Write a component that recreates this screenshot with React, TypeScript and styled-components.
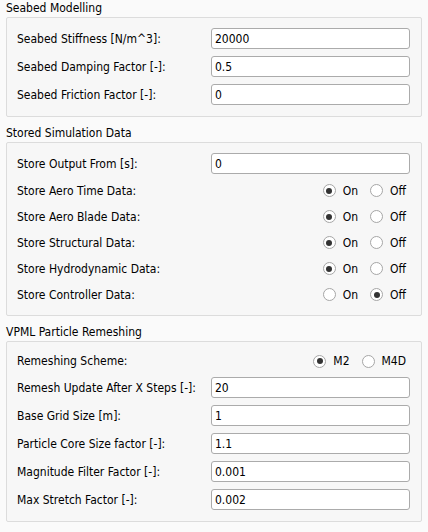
import React from "react";
import styled, { createGlobalStyle } from "styled-components";

const GlobalStyle = createGlobalStyle`
  html, body {
    margin: 0;
    padding: 0;
    background: #fafafa;
  }
  body {
    font-family: "DejaVu Sans Condensed", "DejaVu Sans", sans-serif;
    font-size: 12px;
    color: #000;
  }
  * { box-sizing: border-box; }
`;

const Page = styled.div`
  width: 428px;
  padding: 0 6px 0 6px;
  display: flex;
  flex-direction: column;
  gap: 8px;
`;

const Section = styled.section`
  display: flex;
  flex-direction: column;
`;

const Title = styled.div`
  height: 17px;
  line-height: 16px;
`;

const Box = styled.div`
  border: 1px solid #dcdcdc;
  border-radius: 2px;
  background: #f7f7f7;
  padding: 10px 11px 11px 10px;
  display: grid;
  grid-template-columns: 194px 1fr;
  row-gap: 7px;
  align-items: center;
`;

const Label = styled.div<{ $h: number }>`
  height: ${(p) => p.$h}px;
  display: flex;
  align-items: center;
  white-space: nowrap;
`;

const Cell = styled.div<{ $h: number }>`
  height: ${(p) => p.$h}px;
  display: flex;
  align-items: center;
  justify-content: flex-end;
`;

const Input = styled.input`
  width: 199px;
  height: 21px;
  border: 1px solid #ababab;
  border-radius: 3px;
  background: #fff;
  padding: 0 3px;
  font: inherit;
  color: #000;
  outline: none;
`;

const RadioGroup = styled.div`
  display: flex;
  align-items: center;
  gap: 12px;
  padding-right: 4px;
`;

const RadioItem = styled.label`
  display: flex;
  align-items: center;
  gap: 7px;
`;

const Circle = styled.span<{ $on: boolean }>`
  width: 13px;
  height: 13px;
  border-radius: 50%;
  border: 1px solid #a6a6a6;
  background: #fff;
  display: flex;
  align-items: center;
  justify-content: center;
  &::after {
    content: "";
    width: 6px;
    height: 6px;
    border-radius: 50%;
    background: ${(p) => (p.$on ? "#333" : "transparent")};
  }
`;

type Row =
  | { kind: "input"; label: string; value: string }
  | { kind: "radio"; label: string; options: [string, string]; selected: number; h?: number };

const Radio = ({ text, on }: { text: string; on: boolean }) => (
  <RadioItem>
    <Circle $on={on} />
    <span>{text}</span>
  </RadioItem>
);

const onOff = (label: string, sel: number): Row => ({
  kind: "radio",
  label,
  options: ["On", "Off"],
  selected: sel,
});

const sections: { title: string; rows: Row[] }[] = [
  {
    title: "Seabed Modelling",
    rows: [
      { kind: "input", label: "Seabed Stiffness [N/m^3]:", value: "20000" },
      { kind: "input", label: "Seabed Damping Factor [-]:", value: "0.5" },
      { kind: "input", label: "Seabed Friction Factor [-]:", value: "0" },
    ],
  },
  {
    title: "Stored Simulation Data",
    rows: [
      { kind: "input", label: "Store Output From [s]:", value: "0" },
      onOff("Store Aero Time Data:", 0),
      onOff("Store Aero Blade Data:", 0),
      onOff("Store Structural Data:", 0),
      onOff("Store Hydrodynamic Data:", 0),
      onOff("Store Controller Data:", 1),
    ],
  },
  {
    title: "VPML Particle Remeshing",
    rows: [
      { kind: "radio", label: "Remeshing Scheme:", options: ["M2", "M4D"], selected: 0, h: 18 },
      { kind: "input", label: "Remesh Update After X Steps [-]:", value: "20" },
      { kind: "input", label: "Base Grid Size [m]:", value: "1" },
      { kind: "input", label: "Particle Core Size factor [-]:", value: "1.1" },
      { kind: "input", label: "Magnitude Filter Factor [-]:", value: "0.001" },
      { kind: "input", label: "Max Stretch Factor [-]:", value: "0.002" },
    ],
  },
];

export default function App() {
  return (
    <>
      <GlobalStyle />
      <Page>
        {sections.map((s) => (
          <Section key={s.title}>
            <Title>{s.title}</Title>
            <Box>
              {s.rows.map((r) => {
                const h = r.kind === "input" ? 21 : r.h ?? 19;
                return (
                  <React.Fragment key={r.label}>
                    <Label $h={h}>{r.label}</Label>
                    <Cell $h={h}>
                      {r.kind === "input" ? (
                        <Input defaultValue={r.value} />
                      ) : (
                        <RadioGroup>
                          <Radio text={r.options[0]} on={r.selected === 0} />
                          <Radio text={r.options[1]} on={r.selected === 1} />
                        </RadioGroup>
                      )}
                    </Cell>
                  </React.Fragment>
                );
              })}
            </Box>
          </Section>
        ))}
      </Page>
    </>
  );
}
